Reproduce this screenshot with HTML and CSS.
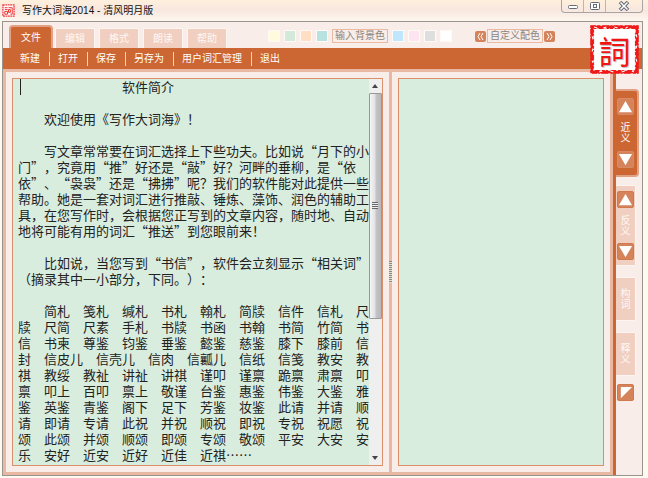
FILE: index.html
```html
<!DOCTYPE html>
<html lang="zh-CN">
<head>
<meta charset="utf-8">
<title>写作大词海2014 - 清风明月版</title>
<link rel="stylesheet" href="styles.css">
</head>
<body>
<header class="titlebar">
  <svg class="app-icon" viewBox="0 0 14 14" aria-hidden="true">
    <rect width="14" height="14" fill="#fff"/>
    <rect x="1" y="1" width="12" height="12" fill="none" stroke="#e33" stroke-width="1.4" stroke-dasharray="2 .6"/>
    <path d="M3 4h3M3 6h3M3 8h3v3H3zM7 4h4v7H9M7 6h2v3H7z" fill="none" stroke="#e22"/>
  </svg>
  <h1 class="caption">写作大词海2014 - 清风明月版</h1>
  <div class="window-buttons">
    <button aria-label="最小化"><svg viewBox="0 0 12 10"><rect x="1.5" y="4.5" width="9" height="3" rx="1" fill="#fff" stroke="#666b78"/></svg></button>
    <button aria-label="最大化"><svg viewBox="0 0 12 10"><rect x="1.5" y="1.5" width="9" height="7" rx="1" fill="#fff" stroke="#666b78"/><rect x="4.5" y="3.5" width="3" height="3" fill="#fff" stroke="#666b78"/></svg></button>
    <button class="close" aria-label="关闭"><svg viewBox="0 0 12 10"><path d="M2 1l8 8M10 1L2 9" stroke="#666b78" stroke-width="3.6"/><path d="M2.5 1.5l7 7M9.5 1.5l-7 7" stroke="#fff" stroke-width="1.5"/></svg></button>
  </div>
</header>
<div class="window">
  <div class="ribbon">
    <nav class="tabs">
      <button class="tab active">文件</button>
      <button class="tab">编辑</button>
      <button class="tab">格式</button>
      <button class="tab">朗读</button>
      <button class="tab">帮助</button>
    </nav>
    <div class="colors">
      <button class="swatch yellow" aria-label="浅黄"></button>
      <button class="swatch green" aria-label="浅绿"></button>
      <button class="swatch orange" aria-label="浅橙"></button>
      <button class="swatch teal" aria-label="青色"></button>
      <button class="field">输入背景色</button>
      <button class="swatch blue" aria-label="浅蓝"></button>
      <button class="swatch pink" aria-label="浅粉"></button>
      <button class="swatch gray" aria-label="灰色"></button>
      <button class="swatch white" aria-label="白色"></button>
    </div>
    <div class="scheme">
      <button class="step" aria-label="上一个配色"><svg viewBox="0 0 11 11"><path d="M5 2L3 5.5L5 9M8 2L6 5.5L8 9"/></svg></button>
      <button class="field">自定义配色</button>
      <button class="step" aria-label="下一个配色"><svg viewBox="0 0 11 11"><path d="M3 2l2 3.5L3 9M6 2l2 3.5L6 9"/></svg></button>
    </div>
    <div class="seal">
      <svg viewBox="0 0 48 48" aria-hidden="true">
        <rect x="1" y="1" width="46" height="46" fill="#fff"/>
        <rect x="2" y="2" width="44" height="44" fill="none" stroke="#f01818" stroke-width="2.5"/>
        <rect x="1" y="1" width="46" height="46" fill="none" stroke="#f01818" stroke-width="1.5" stroke-dasharray="5 1 3 2 7 1 2 1"/>
        <rect x="3.5" y="3.5" width="41" height="41" fill="none" stroke="#f01818" stroke-dasharray="3 2 5 3 2 1"/>
        <path d="M4 2l3 1M13 3l3-1M24 2l3 1M35 3l2-1M2 11l1 3M3 23l-1 3M2 35l1 2M45 9l1 3M46 20l-1 3M45 33l1 3M9 46l3-1M20 45l3 1M31 46l3-1M41 45l2 1" stroke="#fff"/>
      </svg>
      <span>詞</span>
    </div>
  </div>
  <nav class="menu">
    <button>新建</button>
    <button>打开</button>
    <button>保存</button>
    <button>另存为</button>
    <button>用户词汇管理</button>
    <button>退出</button>
  </nav>
  <main class="work">
    <div class="panes">
      <section class="pane">
        <div class="editor">
          <textarea class="text" aria-label="文章" rows="24" spellcheck="false">　　　　　　　　软件简介

　　欢迎使用《写作大词海》！

　　写文章常常要在词汇选择上下些功夫。比如说“月下的小
门”，究竟用“推”好还是“敲”好？河畔的垂柳，是“依
依”、“袅袅”还是“拂拂”呢？我们的软件能对此提供一些
帮助。她是一套对词汇进行推敲、锤炼、藻饰、润色的辅助工
具，在您写作时，会根据您正写到的文章内容，随时地、自动
地将可能有用的词汇“推送”到您眼前来！

　　比如说，当您写到“书信”，软件会立刻显示“相关词”
（摘录其中一小部分，下同。）：

　　简札　笺札　缄札　书札　翰札　简牍　信件　信札　尺
牍　尺简　尺素　手札　书牍　书函　书翰　书简　竹简　书
信　书柬　尊鉴　钧鉴　垂鉴　懿鉴　慈鉴　膝下　膝前　信
封　信皮儿　信壳儿　信肉　信瓤儿　信纸　信笺　教安　教
祺　教绥　教祉　讲祉　讲祺　谨叩　谨禀　跪禀　肃禀　叩
禀　叩上　百叩　禀上　敬谨　台鉴　惠鉴　伟鉴　大鉴　雅
鉴　英鉴　青鉴　阁下　足下　芳鉴　妆鉴　此请　并请　顺
请　即请　专请　此祝　并祝　顺祝　即祝　专祝　祝愿　祝
颂　此颂　并颂　顺颂　即颂　专颂　敬颂　平安　大安　安
乐　安好　近安　近好　近佳　近祺……</textarea>
          <i class="caret"></i>
          <div class="scrollbar">
            <button aria-label="向上滚动"><svg viewBox="0 0 6 4"><path d="M0 4L3 0L6 4z"/></svg></button>
            <div class="track"><div class="thumb"><i></i></div></div>
            <button aria-label="向下滚动"><svg viewBox="0 0 6 4"><path d="M0 0h6L3 4z"/></svg></button>
          </div>
        </div>
      </section>
      <div class="splitter"><i></i></div>
      <section class="pane">
        <div class="editor"><textarea class="text" aria-label="相关词" spellcheck="false"></textarea></div>
      </section>
    </div>
    <aside class="side">
      <div class="side-tab current">
        <button class="arrow" aria-label="上一个近义词"><svg viewBox="0 0 16 16"><path d="M8 2l7 12H1z"/></svg></button>
        <span>近义</span>
        <button class="arrow" aria-label="下一个近义词"><svg viewBox="0 0 16 16"><path d="M1 2h14L8 14z"/></svg></button>
      </div>
      <div class="side-tab">
        <button class="arrow" aria-label="上一个反义词"><svg viewBox="0 0 16 16"><path d="M8 2l7 12H1z"/></svg></button>
        <span>反义</span>
        <button class="arrow" aria-label="下一个反义词"><svg viewBox="0 0 16 16"><path d="M1 2h14L8 14z"/></svg></button>
      </div>
      <button class="side-tab short"><span>构词</span></button>
      <button class="side-tab short"><span>释义</span></button>
      <button class="arrow corner" aria-label="收起"><svg viewBox="0 0 16 16"><path d="M3 2h12L3 14z"/></svg></button>
    </aside>
  </main>
</div>
</body>
</html>
```

FILE: styles.css
```css
:root {
  --orange: #cc6633;
  --salmon: #e8b8a2;
  --peach: #f0cfc1;
  --paper: #f8ede8;
  --mint: #d9eddf;
  --line: #db8f69;
}

* {
  box-sizing: border-box;
}

body {
  margin: 0;
  padding: 0 5px 2px 2px;
  height: 100vh;
  display: flex;
  flex-direction: column;
  background: linear-gradient(#fff0dc 0, #f7e7df 10px, #fdf6ee 20px, #fdfbee 60px, #fdfbf0);
  font: 10px/14px "Liberation Sans", "Noto Sans CJK SC", sans-serif;
  overflow: hidden;
}

button {
  margin: 0;
  padding: 0;
  border: 0;
  background: none;
  color: inherit;
  font: inherit;
}

svg {
  display: block;
}

/* title bar */
.titlebar {
  display: flex;
  align-items: center;
  gap: 7px;
  height: 21px;
  flex: none;
}

.app-icon {
  width: 13px;
  height: 13px;
}

.caption {
  margin: 0;
  flex: 1;
  font-size: 10px;
  font-weight: 400;
  color: #111;
}

.window-buttons {
  display: flex;
  align-self: flex-start;
  border: 1px solid #a9a3a3;
  border-top: 0;
  border-radius: 0 0 4px 4px;
}

.window-buttons button {
  width: 22px;
  height: 12px;
  display: grid;
  place-items: center;
  border-right: 1px solid #bdb5b2;
}

.window-buttons .close {
  width: 36px;
  border: 0;
}

.window-buttons svg {
  width: 12px;
  height: 10px;
}

/* window frame */
.window {
  flex: 1;
  display: flex;
  flex-direction: column;
  min-height: 0;
  border: 1px solid #999490;
  background: var(--paper);
}

.ribbon {
  position: relative;
  display: flex;
  align-items: flex-end;
  height: 26px;
  padding-left: 6px;
  flex: none;
}

.tabs {
  display: flex;
  align-items: flex-end;
  gap: 4px;
  width: 218px;
}

.tab {
  width: 40px;
  height: 20px;
  border: 1px solid #fcf6f3;
  border-bottom: 0;
  border-radius: 2px 2px 0 0;
  background: var(--peach);
  color: #fff8f4;
}

.tab.active {
  width: 44px;
  height: 23px;
  margin-right: -2px;
  border: 2px solid #e0a184;
  border-bottom: 0;
  border-radius: 4px 4px 0 0;
  background: var(--orange);
  color: #fff;
}

.colors,
.scheme {
  display: flex;
  align-items: center;
  height: 24px;
  gap: 4px;
}

.colors {
  margin-left: 41px;
}

.scheme {
  margin-left: 23px;
  gap: 1px;
}

.swatch {
  width: 12px;
  height: 12px;
  border: 1px solid #fffaf6;
}

.yellow { background: #fffbdc; }
.green { background: #d3eadb; }
.orange { background: #ffdfc3; }
.teal { background: #b8e2df; }
.blue { background: #bfe6fd; }
.pink { background: #fce5f0; }
.gray { background: #dedede; }
.white { background: #fff; }

.field {
  width: 56px;
  height: 14px;
  border: 1px solid #eab9a2;
  line-height: 12px;
  color: #8a8583;
  white-space: nowrap;
}

.step {
  width: 11px;
  height: 11px;
  border-radius: 2px;
  background: #d5835b;
}

.step path {
  fill: none;
  stroke: #fff;
}

.seal {
  position: absolute;
  top: 3px;
  right: 3px;
  width: 49px;
  height: 49px;
  display: grid;
  place-items: center;
}

.seal > * {
  grid-area: 1 / 1;
}

.seal svg {
  width: 100%;
  height: 100%;
}

.seal span {
  z-index: 1;
  color: #f01414;
  font: 32px/36px "Noto Sans CJK TC", sans-serif;
  text-shadow: 1px 1px 1px #bbb;
}

.menu {
  display: flex;
  align-items: center;
  height: 21px;
  padding-left: 9px;
  flex: none;
  background: var(--orange);
  color: #fff;
}

.menu button {
  padding: 0 9px 0 8px;
  border-right: 1px solid #f3d5c6;
}

.menu button:last-child {
  border: 0;
}

/* work area */
.work {
  flex: 1;
  display: flex;
  min-height: 0;
}

.panes {
  flex: 1;
  display: grid;
  grid-template-columns: minmax(0, 382fr) 3px minmax(0, 218fr);
  border: 3px solid var(--salmon);
}

.pane {
  padding: 6px;
  display: flex;
}

.editor {
  position: relative;
  flex: 1;
  min-width: 0;
  display: flex;
  border: 1px solid var(--line);
  background: var(--mint);
}

.text {
  flex: 1;
  min-width: 0;
  margin: 0;
  padding: 0 0 0 5px;
  border: 0;
  outline: 0;
  resize: none;
  overflow: hidden;
  background: transparent;
  color: #222;
  font: 13px/16px "Noto Sans CJK SC", sans-serif;
  white-space: pre;
  text-spacing-trim: space-all;
}

.caret {
  position: absolute;
  left: 7px;
  top: 0;
  width: 1px;
  height: 16px;
  background: #222;
}

.splitter {
  display: grid;
  place-items: center;
  background: var(--salmon);
}

.splitter i {
  width: 3px;
  height: 22px;
  background: repeating-linear-gradient(#8a8a80 0 1px, #dcdccb 1px 2px);
}

.scrollbar {
  width: 13px;
  flex: none;
  display: flex;
  flex-direction: column;
  background: #efefef;
}

.scrollbar button {
  height: 14px;
  display: grid;
  place-items: center;
}

.scrollbar svg {
  width: 6px;
  height: 4px;
  fill: #444;
}

.track {
  flex: 1;
}

.thumb {
  height: 63%;
  display: grid;
  place-items: center;
  border: 1px solid #999;
  border-radius: 1px;
  background: linear-gradient(90deg, #f5f5f5, #e2e2e4 45%, #c4c4c8 55%, #b8b8bc);
}

.thumb i {
  width: 6px;
  height: 7px;
  background: repeating-linear-gradient(#666 0 1px, #eee 1px 2px);
}

/* side tabs */
.side {
  width: 29px;
  flex: none;
  display: flex;
  flex-direction: column;
  align-items: flex-start;
  padding-top: 20px;
  border-left: 3px solid var(--orange);
}

.side-tab {
  width: 20px;
  height: 81px;
  margin-bottom: 11px;
  padding: 5px 1px;
  display: flex;
  flex-direction: column;
  align-items: center;
  justify-content: space-between;
  border: 1px solid #fcf5f2;
  border-left: 0;
  border-radius: 0 2px 2px 0;
  background: var(--peach);
  color: #fff8f4;
}

.side-tab.current {
  width: 23px;
  height: 88px;
  margin-bottom: 8px;
  padding: 7px 3px 7px 1px;
  border: 2px solid #e0a184;
  border-left: 0;
  border-radius: 0 4px 4px 0;
  background: var(--orange);
  color: #fff;
}

.side-tab.short {
  height: 44px;
  justify-content: center;
}

.side-tab span {
  width: 10px;
  line-height: 11px;
  word-break: break-all;
}

.arrow {
  width: 17px;
  height: 17px;
  display: grid;
  place-items: center;
  border: 1px solid #cf7a50;
  border-radius: 2px;
  background: #d5835b;
}

.current .arrow {
  border-color: #d78a65;
}

.arrow svg {
  width: 15px;
  height: 15px;
  fill: #fff;
}

.corner {
  margin: -3px 0 0 1px;
}
```
